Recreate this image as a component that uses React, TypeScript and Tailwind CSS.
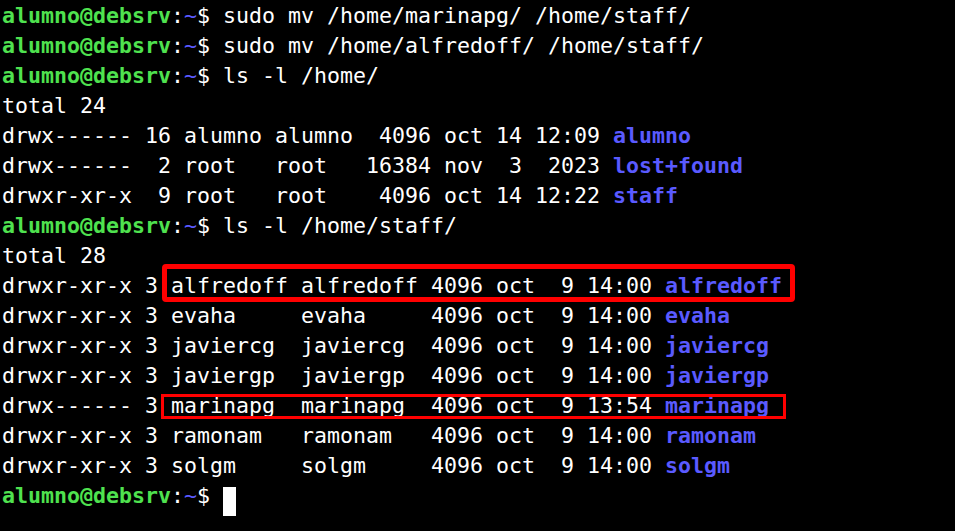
import React from "react";

const G = "text-[#4fe24f] font-bold";
const B = "text-[#5a5aff] font-bold";

const Prompt = () => (
  <>
    <span className={G}>alumno@debsrv</span>
    <span>:</span>
    <span className="text-[#5a5aff]">~</span>
    <span>$ </span>
  </>
);

const lsRows: [string, string][] = [
  ["drwx------ 16 alumno alumno  4096 oct 14 12:09 ", "alumno"],
  ["drwx------  2 root   root   16384 nov  3  2023 ", "lost+found"],
  ["drwxr-xr-x  9 root   root    4096 oct 14 12:22 ", "staff"],
];

const staffRows: [string, string][] = [
  ["drwxr-xr-x 3 alfredoff alfredoff 4096 oct  9 14:00 ", "alfredoff"],
  ["drwxr-xr-x 3 evaha     evaha     4096 oct  9 14:00 ", "evaha"],
  ["drwxr-xr-x 3 javiercg  javiercg  4096 oct  9 14:00 ", "javiercg"],
  ["drwxr-xr-x 3 javiergp  javiergp  4096 oct  9 14:00 ", "javiergp"],
  ["drwx------ 3 marinapg  marinapg  4096 oct  9 13:54 ", "marinapg"],
  ["drwxr-xr-x 3 ramonam   ramonam   4096 oct  9 14:00 ", "ramonam"],
  ["drwxr-xr-x 3 solgm     solgm     4096 oct  9 14:00 ", "solgm"],
];

const Line = ({ children }: { children: React.ReactNode }) => (
  <div className="h-[30px] whitespace-pre leading-[30px]">{children}</div>
);

export default function App() {
  return (
    <div className="relative h-[531px] w-[955px] overflow-hidden bg-black pl-[2px] pt-[1px] font-['DejaVu_Sans_Mono',monospace] text-[21.6px] text-white">
      <Line>
        <Prompt />
        sudo mv /home/marinapg/ /home/staff/
      </Line>
      <Line>
        <Prompt />
        sudo mv /home/alfredoff/ /home/staff/
      </Line>
      <Line>
        <Prompt />
        ls -l /home/
      </Line>
      <Line>total 24</Line>
      {lsRows.map(([meta, name]) => (
        <Line key={name}>
          {meta}
          <span className={B}>{name}</span>
        </Line>
      ))}
      <Line>
        <Prompt />
        ls -l /home/staff/
      </Line>
      <Line>total 28</Line>
      {staffRows.map(([meta, name]) => (
        <Line key={name}>
          {meta}
          <span className={B}>{name}</span>
        </Line>
      ))}
      <Line>
        <Prompt />
        <span className="inline-block h-[29px] w-[13px] translate-y-[6px] bg-white align-top" />
      </Line>

      {/* highlight boxes */}
      <div className="pointer-events-none absolute left-[162px] top-[264px] h-[38px] w-[633px] rounded-[4px] border-[5px] border-[#ff0000]" />
      <div className="pointer-events-none absolute left-[161px] top-[394px] h-[25px] w-[625px] border-[3px] border-[#ff0000]" />
    </div>
  );
}
